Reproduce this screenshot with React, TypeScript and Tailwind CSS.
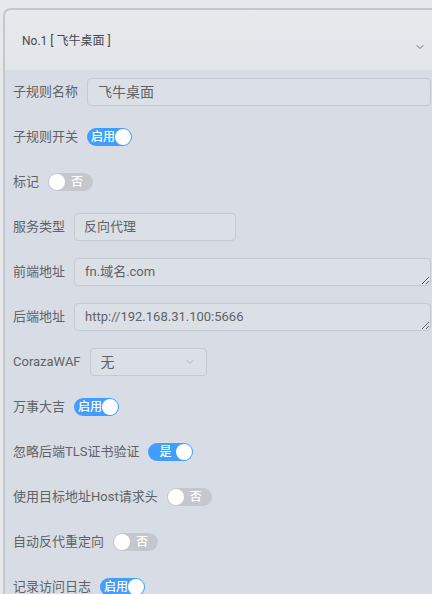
import { ChevronDown } from "lucide-react";

const font = { fontFamily: 'Roboto, "Noto Sans CJK SC", sans-serif' };

function Toggle({ on, text, short }: { on: boolean; text: string; short?: boolean }) {
  if (on) {
    return (
      <div className="flex h-[18px] w-[45px] shrink-0 items-center justify-between rounded-full bg-[#409eff] pl-[4px] pr-[1px]">
        <span className={`whitespace-nowrap text-[12px] leading-none font-medium text-white ${short ? "pl-[7px]" : ""}`}>{text}</span>
        <span className="h-[16px] w-[16px] shrink-0 rounded-full bg-white" />
      </div>
    );
  }
  return (
    <div className="flex h-[18px] w-[45px] shrink-0 items-center justify-between rounded-full bg-[#c4c7ce] pl-[1px] pr-[10px]">
      <span className="h-[16px] w-[16px] shrink-0 rounded-full bg-white" />
      <span className="whitespace-nowrap text-[12px] leading-none font-medium text-white">{text}</span>
    </div>
  );
}

function Row({ label, children }: { label: string; children: React.ReactNode }) {
  return (
    <div className="flex h-7 items-center">
      <span className="mr-[9px] shrink-0 whitespace-nowrap text-[13px] text-[#606266]">{label}</span>
      {children}
    </div>
  );
}

export default function App() {
  return (
    <div className="h-[594px] w-[432px] overflow-hidden bg-[#e7e8eb] pt-2 pl-[3px]" style={font}>
      <div className="h-full w-[440px] overflow-hidden rounded-tl-lg border-t-2 border-l-2 border-[#c3c7cf]">
        {/* header */}
        <div className="flex h-[60px] items-center justify-between bg-gradient-to-b from-[#e8e9ec] to-[#e2e5ea] pl-[17px] pr-[17px]">
          <span className="mt-[1px] text-[12px] text-[#45484d]">No.1 [ 飞牛桌面 ]</span>
          <ChevronDown className="mt-[14px] h-3 w-3 text-[#3f4247]" strokeWidth={1.5} />
        </div>

        {/* form */}
        <div className="flex h-full flex-col gap-[17px] bg-[#d8dde5] pt-2 pl-2">
          <Row label="子规则名称">
            <div className="flex h-7 w-[344px] items-center rounded border border-[#c5c9d0] bg-[#dbdfe6] px-[10px] text-[14px] text-[#606266]">
              飞牛桌面
            </div>
          </Row>
          <Row label="子规则开关">
            <Toggle on text="启用" />
          </Row>
          <Row label="标记">
            <Toggle on={false} text="否" />
          </Row>
          <Row label="服务类型">
            <div className="flex h-7 w-[162px] items-center rounded border border-[#c5c9d0] bg-[#dbdfe6] px-[9px] text-[13px] text-[#606266]">
              反向代理
            </div>
          </Row>
          <Row label="前端地址">
            <textarea
              readOnly
              defaultValue="fn.域名.com"
              className="h-7 w-[357px] resize rounded border border-[#c5c9d0] bg-[#dbdfe6] px-[10px] py-[3px] text-[13px] leading-[20px] text-[#606266] outline-none"
            />
          </Row>
          <Row label="后端地址">
            <textarea
              readOnly
              defaultValue="http://192.168.31.100:5666"
              className="h-7 w-[357px] resize rounded border border-[#c5c9d0] bg-[#dbdfe6] px-[10px] py-[3px] text-[13px] leading-[20px] text-[#606266] outline-none"
            />
          </Row>
          <Row label="CorazaWAF">
            <div className="flex h-7 w-[117px] items-center justify-between rounded border border-[#c5c9d0] bg-[#dbdfe6] pl-[10px] pr-[10px] text-[14px] text-[#606266]">
              <span>无</span>
              <ChevronDown className="h-3 w-3 text-[#a8abb2]" strokeWidth={1.5} />
            </div>
          </Row>
          <Row label="万事大吉">
            <Toggle on text="启用" />
          </Row>
          <Row label="忽略后端TLS证书验证">
            <Toggle on text="是" short />
          </Row>
          <Row label="使用目标地址Host请求头">
            <Toggle on={false} text="否" />
          </Row>
          <Row label="自动反代重定向">
            <Toggle on={false} text="否" />
          </Row>
          <Row label="记录访问日志">
            <Toggle on text="启用" />
          </Row>
        </div>
      </div>
    </div>
  );
}
